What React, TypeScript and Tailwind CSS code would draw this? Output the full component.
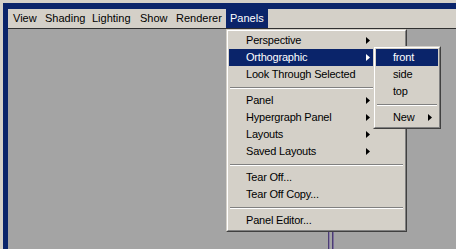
import type { ReactNode } from "react";

const font = { fontFamily: '"Liberation Sans", Arial, sans-serif' };

type Item =
  | { kind: "item"; label: string; sub?: boolean; active?: boolean }
  | { kind: "sep" };

const panelsMenu: Item[] = [
  { kind: "item", label: "Perspective", sub: true },
  { kind: "item", label: "Orthographic", sub: true, active: true },
  { kind: "item", label: "Look Through Selected" },
  { kind: "sep" },
  { kind: "item", label: "Panel", sub: true },
  { kind: "item", label: "Hypergraph Panel", sub: true },
  { kind: "item", label: "Layouts", sub: true },
  { kind: "item", label: "Saved Layouts", sub: true },
  { kind: "sep" },
  { kind: "item", label: "Tear Off..." },
  { kind: "item", label: "Tear Off Copy..." },
  { kind: "sep" },
  { kind: "item", label: "Panel Editor..." },
];

const orthoMenu: Item[] = [
  { kind: "item", label: "front", active: true },
  { kind: "item", label: "side" },
  { kind: "item", label: "top" },
  { kind: "sep" },
  { kind: "item", label: "New", sub: true },
];

const menuBar = [
  { label: "View", w: "w-[32px]" },
  { label: "Shading", w: "w-[47px]" },
  { label: "Lighting", w: "w-[48px]" },
  { label: "Show", w: "w-[36px]" },
  { label: "Renderer", w: "w-[54px]" },
];

function Arrow({ white }: { white?: boolean }) {
  return (
    <svg width="4" height="7" viewBox="0 0 4 7" className="shrink-0">
      <polygon points="0,0 4,3.5 0,7" fill={white ? "#ffffff" : "#000000"} />
    </svg>
  );
}

function Frame({ children, className }: { children: ReactNode; className: string }) {
  // classic win2k 3d frame: light/white top-left, gray/dark bottom-right
  return (
    <div
      className={
        "absolute border border-t-[#d4d0c8] border-l-[#d4d0c8] border-r-[#404040] border-b-[#404040] " +
        className
      }
    >
      <div className="border border-t-white border-l-white border-r-[#808080] border-b-[#808080] bg-[#d4d0c8] p-px">
        {children}
      </div>
    </div>
  );
}

function MenuList({ items, arrowRight }: { items: Item[]; arrowRight: string }) {
  return (
    <div className="flex flex-col">
      {items.map((it, i) =>
        it.kind === "sep" ? (
          <div key={i} className="flex h-[9px] flex-col justify-center px-px">
            <div className="h-px bg-[#808080]" />
            <div className="h-px bg-white" />
          </div>
        ) : (
          <div
            key={i}
            className={
              "flex h-[17px] items-center pl-[17px] text-[11px] leading-none tracking-[-0.2px] " +
              (it.active ? "bg-[#0a246a] text-white" : "text-black")
            }
          >
            <span className="flex-1 whitespace-nowrap">{it.label}</span>
            {it.sub && (
              <span className={arrowRight}>
                <Arrow white={it.active} />
              </span>
            )}
          </div>
        ),
      )}
    </div>
  );
}

export default function App() {
  return (
    <div
      className="relative h-[249px] w-[456px] overflow-hidden bg-[#d4d0c8] pl-[3px] pt-[3px]"
      style={font}
    >
      <div className="flex h-full flex-col border-l-[5px] border-t-[6px] border-l-[#0a246a] border-t-[#0a246a] bg-[#a4a4a4]">
        <div className="flex h-[20px] border-b border-[#303030] bg-[#d4d0c8] pl-px text-[11px] text-black">
          {menuBar.map((m) => (
            <div key={m.label} className={"flex items-center pl-[4px] " + m.w}>
              {m.label}
            </div>
          ))}
          <div className="flex w-[42px] items-center bg-[#0a246a] pl-[4px] text-white">
            Panels
          </div>
        </div>
        <div className="relative flex-1">
          <svg
            width="8"
            height="20"
            className="absolute left-[320px] top-[201px]"
            viewBox="0 0 8 20"
          >
            <line x1="0.5" y1="0" x2="0.5" y2="20" stroke="#4b3c74" strokeWidth="1" />
            <line x1="1.5" y1="0" x2="1.5" y2="20" stroke="#8a80a4" strokeWidth="1" />
            <line x1="4.5" y1="0" x2="4.5" y2="20" stroke="#4b3c74" strokeWidth="1" />
            <line x1="5.5" y1="0" x2="5.5" y2="20" stroke="#7a6e98" strokeWidth="1" />
          </svg>
        </div>
      </div>

      <Frame className="left-[226px] top-[29px] w-[181px]">
        <MenuList items={panelsMenu} arrowRight="mr-[34px]" />
      </Frame>

      <Frame className="left-[373px] top-[46px] w-[68px]">
        <MenuList items={orthoMenu} arrowRight="mr-[6px]" />
      </Frame>
    </div>
  );
}
